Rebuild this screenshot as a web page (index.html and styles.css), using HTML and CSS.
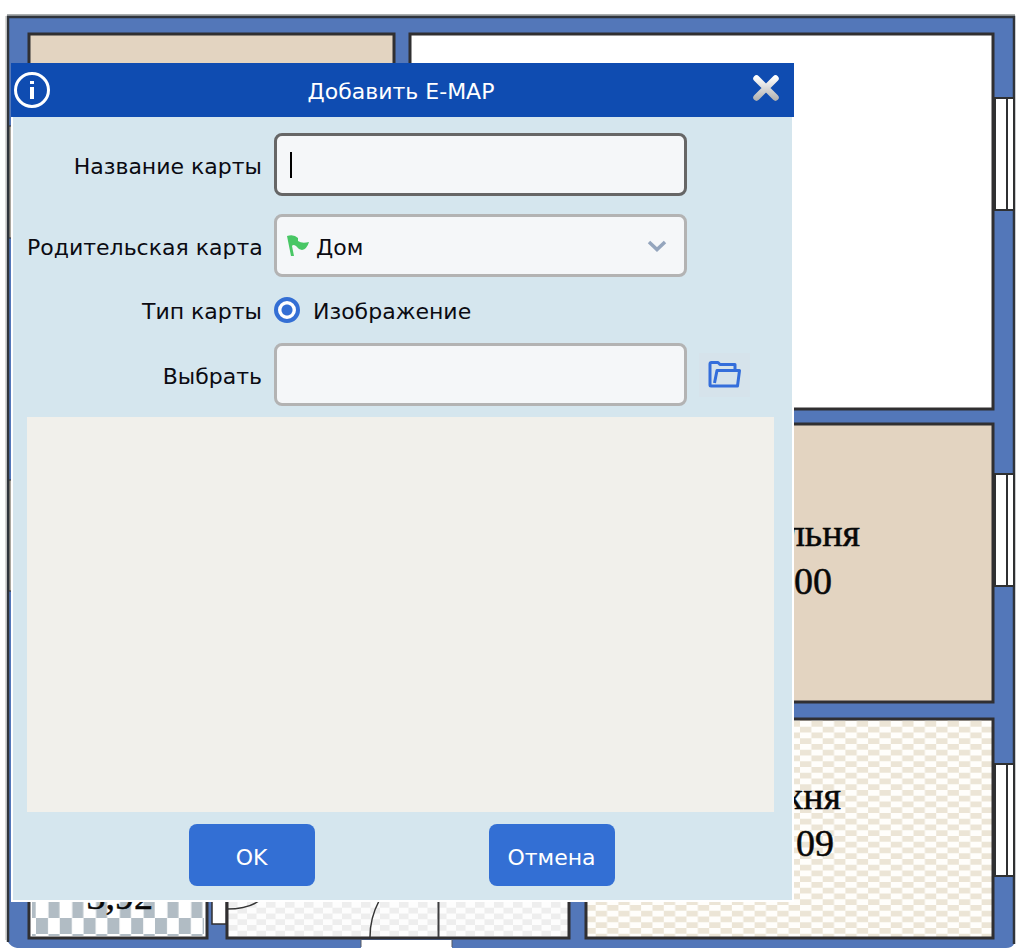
FILE: index.html
```html
<!DOCTYPE html>
<html lang="ru">
<head>
<meta charset="utf-8">
<title>Добавить E-MAP</title>
<link rel="stylesheet" href="styles.css">
</head>
<body>
<main class="stage">
  <svg class="plan" viewBox="0 0 1024 949" aria-hidden="true">
    <defs>
      <pattern id="kitchen-tile" x="800" y="721" width="22.7" height="11.5" patternUnits="userSpaceOnUse">
        <rect width="22.7" height="11.5" fill="#fffefb"/>
        <rect width="11.3" height="5.7" x="11.4" fill="#ece5d6"/>
        <rect width="11.3" height="5.7" y="5.8" fill="#ece5d6"/>
      </pattern>
      <pattern id="hall-tile" x="228" y="902" width="19" height="11.5" patternUnits="userSpaceOnUse">
        <rect width="19" height="11.5" fill="#fdfdfd"/>
        <rect width="9.5" height="5.7" fill="#eeeeee"/>
        <rect width="9.5" height="5.7" x="9.5" y="5.8" fill="#eeeeee"/>
      </pattern>
      <pattern id="bath-tile" x="36" y="902" width="23.8" height="32" patternUnits="userSpaceOnUse">
        <rect width="23.8" height="32" fill="#fff"/>
        <rect x="12.5" width="11" height="16" fill="#b1bcc4"/>
        <rect x="0" y="16" width="12" height="16" fill="#b1bcc4"/>
      </pattern>
    </defs>
    <path d="M7 15H1015" stroke="#a9adae" stroke-width="2"/>
    <path d="M8 17H1014V944Q1012 948 1006 948H17Q11 947 8 942Z" fill="#5377b9"/>
    <path d="M8 942V17H1014V944" fill="none" stroke="#2f343c" stroke-width="2.5"/>
    <path d="M6 16V940" stroke="#b3b3b0"/>
    <g fill="#e3d4c1" stroke="#302f31" stroke-width="3">
      <rect x="29" y="34" width="365" height="300"/>
      <rect x="410" y="34" width="583" height="375" fill="#fff"/>
      <rect x="410" y="424" width="583" height="278"/>
      <rect x="586" y="719" width="407" height="219" fill="url(#kitchen-tile)"/>
      <rect x="227" y="800" width="342" height="138" fill="url(#hall-tile)"/>
      <rect x="29" y="800" width="178" height="138" fill="#fff"/>
      <rect x="212" y="800" width="14" height="124" fill="#fff" stroke-width="1.5"/>
    </g>
    <rect x="32" y="886" width="172" height="50" fill="url(#bath-tile)"/>
    <g fill="#fff" stroke="#2f3032" stroke-width="2">
      <path d="M995 98H1014V210H995ZM1007 98V210"/>
      <path d="M995 474H1014V586H995ZM1007 474V586"/>
      <path d="M995 764H1014V876H995ZM1007 764V876"/>
      <path d="M9 126H14V238H9ZM9 480H14V591H9Z" fill="#aaa69e" stroke-width="1"/>
    </g>
    <rect x="361" y="940" width="91" height="9" fill="#fff"/>
    <path d="M361 939V947M452 939V947" stroke="#555b67"/>
    <path d="M438.500 890V937" stroke="#3e3e40" stroke-width="2"/>
    <path d="M227 909Q247 909 259 901M379 901Q370 918 370 937" fill="none" stroke="#343434" stroke-width="1.5"/>
    <g class="room-label">
      <text x="860" y="546">льня</text>
      <text x="832" y="594">00</text>
      <text x="841" y="809">хня</text>
      <text x="834" y="856">09</text>
      <text x="153" y="909">3,92</text>
    </g>
  </svg>

  <form class="dialog" aria-labelledby="dialog-title">
    <header class="dialog-header">
      <svg class="info-icon" viewBox="0 0 36 36" aria-hidden="true">
        <circle cx="18" cy="18" r="16.500" fill="none" stroke="#fff" stroke-width="3"/>
        <path d="M16 9h4v3h-4zM16 15h4v12h-4z" fill="#fff"/>
      </svg>
      <h1 class="dialog-title" id="dialog-title">Добавить E-MAP</h1>
      <button class="close-button" type="button" aria-label="Закрыть">
        <svg class="close-icon" viewBox="0 0 28 28" aria-hidden="true">
          <defs><linearGradient id="metal" gradientUnits="userSpaceOnUse" x1="0" y1="0" x2="0" y2="28"><stop offset=".1" stop-color="#fff"/><stop offset="1" stop-color="#aaa"/></linearGradient></defs>
          <path d="M4.500 4.500L23.500 23.500M23.500 4.500L4.500 23.500" stroke="url(#metal)" stroke-width="6.500" stroke-linecap="round"/>
        </svg>
      </button>
    </header>
    <div class="dialog-body">
      <div class="fields">
        <label class="field-label" for="map-name">Название карты</label>
        <input class="control control-focused" id="map-name" type="text">

        <label class="field-label" for="parent-map">Родительская карта</label>
        <div class="select-wrap">
          <select class="control select" id="parent-map"><option>Дом</option></select>
          <svg class="flag-icon" viewBox="0 0 24 22" aria-hidden="true">
            <path d="M1 1Q8-1 12 3L12 6Q16 9 23 7Q21 14 16 15Q12 14 10 11Q7 9 6 11L8 21H5Z" fill="#48c765"/>
          </svg>
          <svg class="chevron-icon" viewBox="0 0 20 12" aria-hidden="true">
            <path d="M2 2L10 9.500L18 2" fill="none" stroke="#94a5bd" stroke-width="3.500"/>
          </svg>
        </div>

        <span class="field-label" id="type-label">Тип карты</span>
        <div class="radio-row" role="radiogroup" aria-labelledby="type-label">
          <input class="radio" id="type-image" name="type" type="radio" checked>
          <label class="radio-label" for="type-image">Изображение</label>
        </div>

        <label class="field-label" for="file-path">Выбрать</label>
        <input class="control" id="file-path" type="text">
        <button class="browse-button" type="button" aria-label="Открыть папку">
          <svg class="folder-icon" viewBox="0 0 34 28" aria-hidden="true">
            <path d="M6.500 22L9 9.500H31.500L29.500 25H3Q2 25 2 24V3Q2 1.500 3.500 1.500H10L12 3.500H27V9" fill="none" stroke="#346edb" stroke-width="3" stroke-linejoin="round"/>
          </svg>
        </button>
      </div>
      <div class="preview"></div>
      <div class="actions">
        <button class="action-button" type="submit">OK</button>
        <button class="action-button" type="button">Отмена</button>
      </div>
    </div>
  </form>
</main>
</body>
</html>
```
FILE: styles.css
```css
* { box-sizing: border-box; }

body {
  margin: 0;
  background: #fff;
  color: #0b0b12;
  font-family: "DejaVu Sans", sans-serif;
  font-size: 22px;
  line-height: 26px;
}

button, input, select { font: inherit; color: inherit; }

.stage { display: grid; }

.plan, .dialog { grid-area: 1 / 1; }

.plan { display: block; width: 100%; }

.room-label {
  font-family: "Liberation Serif", serif;
  font-size: 38px;
  text-anchor: end;
  fill: #080808;
  stroke: #080808;
  stroke-width: 0.5;
}

.dialog {
  align-self: start;
  z-index: 1;
  width: 100%;
  max-width: 783px;
  margin: 63px 0 0 11px;
}

.dialog-header {
  display: flex;
  align-items: center;
  height: 54px;
  padding: 0 12px 0 3px;
  background: #0f4cb1;
  color: #fff;
}

.info-icon { width: 36px; height: 36px; }

.dialog-title {
  flex: 1;
  margin: 0;
  padding-top: 3px;
  font-size: 22px;
  font-weight: 400;
  text-align: center;
}

.close-button {
  display: flex;
  padding: 0 2px 4px 0;
  border: 0;
  background: none;
}

.close-icon { width: 28px; height: 28px; }

.dialog-body {
  border: 2px solid #fff;
  border-top: 0;
  padding: 16px 0 14px;
  background: #d5e6ee;
}

.fields {
  display: grid;
  grid-template-columns: 235px 1fr 51px;
  align-items: center;
  gap: 18px 12px;
  padding: 0 42px 0 14px;
}

.field-label {
  grid-column: 1;
  padding-top: 4px;
  text-align: right;
  white-space: nowrap;
}

.control {
  display: block;
  width: 100%;
  height: 63px;
  padding: 0 14px;
  border: 3px solid #b3b3b3;
  border-radius: 8px;
  background: #f5f7f9;
  outline: 0;
}

.control-focused {
  border-color: #666;
  background: linear-gradient(#000, #000) 13px center / 2px 26px no-repeat #f5f7f9;
}

.select-wrap { display: grid; align-items: center; }

.select-wrap > * { grid-area: 1 / 1; }

.select { appearance: none; padding: 4px 38px 0 39px; }

.flag-icon {
  width: 24px;
  height: 22px;
  margin-left: 12px;
  pointer-events: none;
}

.chevron-icon {
  justify-self: end;
  width: 20px;
  height: 12px;
  margin-right: 20px;
  pointer-events: none;
}

.radio-row { display: flex; align-items: center; gap: 13px; }

.radio-label { padding-top: 4px; }

.radio {
  appearance: none;
  width: 26px;
  height: 26px;
  margin: 0;
  border: 4px solid #346fd4;
  border-radius: 50%;
  background: radial-gradient(circle, #346fd4 5px, #fff 6px);
}

.browse-button {
  display: flex;
  align-items: center;
  justify-content: center;
  height: 44px;
  padding: 0;
  border: 0;
  background: #d6e3eb;
}

.folder-icon { width: 34px; height: 28px; }

.preview {
  height: 395px;
  margin: 11px 18px 12px 14px;
  background: #f1f0eb;
}

.actions {
  display: flex;
  justify-content: center;
  gap: 174px;
  padding-right: 2px;
}

.action-button {
  width: 126px;
  height: 62px;
  padding: 6px 0 0;
  border: 0;
  border-radius: 8px;
  background: #336fd4;
  color: #fff;
}
```
